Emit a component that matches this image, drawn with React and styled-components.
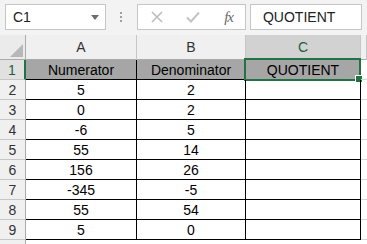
import React from "react";
import styled, { createGlobalStyle, css } from "styled-components";

const GlobalStyle = createGlobalStyle`
  html, body {
    margin: 0;
    padding: 0;
    background: #ffffff;
    overflow: hidden;
  }
  body {
    font-family: "Liberation Sans", Arial, sans-serif;
    font-size: 14px;
  }
`;

const rows = [
  ["Numerator", "Denominator", "QUOTIENT"],
  ["5", "2", ""],
  ["0", "2", ""],
  ["-6", "5", ""],
  ["55", "14", ""],
  ["156", "26", ""],
  ["-345", "-5", ""],
  ["55", "54", ""],
  ["5", "0", ""],
];

const green = "#217346";

const Page = styled.div`
  width: 367px;
  height: 244px;
  overflow: hidden;
  background: #ffffff;
`;

const TopBar = styled.div`
  height: 35px;
  box-sizing: border-box;
  padding: 4px 5px 0 5px;
  background: #f3f3f3;
  display: flex;
  align-items: flex-start;
`;

const Box = styled.div`
  height: 26px;
  box-sizing: border-box;
  background: #ffffff;
  border: 1px solid #c6c6c6;
  display: flex;
  align-items: center;
  color: #222;
`;

const NameBox = styled(Box)`
  width: 102px;
  padding: 0 6px 0 7px;
  justify-content: space-between;
`;

const Caret = styled.span`
  width: 0;
  height: 0;
  border-left: 4px solid transparent;
  border-right: 4px solid transparent;
  border-top: 5px solid #6d6d6d;
`;

const Grip = styled.div`
  width: 31px;
  height: 26px;
  display: flex;
  flex-direction: column;
  align-items: center;
  justify-content: center;
  gap: 2px;

  span {
    width: 2px;
    height: 2px;
    background: #a0a0a0;
  }
`;

const ButtonGroup = styled(Box)`
  width: 110px;
  padding: 0 8px 0 13px;
  justify-content: space-between;
`;

const Fx = styled.span`
  font-family: "Liberation Serif", "Times New Roman", serif;
  font-style: italic;
  font-size: 15px;
  color: #6a6a6a;
  letter-spacing: -1px;
  margin-right: 4px;
`;

const FormulaInput = styled(Box)`
  margin-left: 4px;
  width: 113px;
  padding-left: 12px;
`;

const Grid = styled.div`
  display: grid;
  grid-template-columns: 26px 111px 109px 115px 1fr;
  grid-auto-rows: 20px;
  grid-template-rows: 25px;
`;

const Corner = styled.div`
  background: #ebebeb;
  border-right: 1px solid #ababab;
  border-bottom: 1px solid #ababab;
  box-sizing: border-box;
  display: flex;
  align-items: flex-end;
  justify-content: flex-end;
  padding: 0 2px 2px 0;

  span {
    width: 0;
    height: 0;
    border-left: 13px solid transparent;
    border-bottom: 13px solid #b8b8b8;
  }
`;

const ColHeader = styled.div`
  box-sizing: border-box;
  background: ${({ $active }) => ($active ? "#d2d2d2" : "#f0f0f0")};
  border-right: 1px solid #c6c6c6;
  border-bottom: ${({ $active }) => ($active ? `2px solid ${green}` : "1px solid #ababab")};
  color: ${({ $active }) => ($active ? "#1c5f3a" : "#333")};
  display: flex;
  align-items: center;
  justify-content: center;
  padding-top: ${({ $active }) => ($active ? "1px" : "0")};
`;

const RowHeader = styled.div`
  box-sizing: border-box;
  background: ${({ $active }) => ($active ? "#e1e1e1" : "#f0f0f0")};
  border-bottom: 1px solid #c6c6c6;
  border-right: ${({ $active }) => ($active ? `2px solid ${green}` : "1px solid #ababab")};
  color: ${({ $active }) => ($active ? "#1c5f3a" : "#333")};
  text-align: center;
  line-height: 19px;
  padding-top: 1px;
`;

const Cell = styled.div`
  position: relative;
  box-sizing: border-box;
  text-align: center;
  line-height: 19px;
  padding-top: 1px;
  color: #000;
  white-space: nowrap;
  ${({ $table }) =>
    $table
      ? css`
          border-right: 1px solid #000;
          border-bottom: 1px solid #000;
        `
      : css`
          border-bottom: 1px solid #d4d4d4;
        `}
  ${({ $head }) => $head && css`background: #a6a6a6;`}
`;

const Selection = styled.div`
  position: absolute;
  top: -2px;
  left: -2px;
  right: -1px;
  bottom: -2px;
  border: 2px solid ${green};
  pointer-events: none;
`;

const FillHandle = styled.div`
  position: absolute;
  right: -3px;
  bottom: -3px;
  width: 6px;
  height: 6px;
  background: ${green};
  border: 1px solid #fff;
  border-right: none;
  border-bottom: none;
`;

const CrossIcon = () => (
  <svg width="12" height="12" viewBox="0 0 12 12">
    <path d="M1 1 L11 11 M11 1 L1 11" stroke="#bdbdbd" strokeWidth="1.6" fill="none" />
  </svg>
);

const CheckIcon = () => (
  <svg width="14" height="12" viewBox="0 0 14 12">
    <path d="M1 6.5 L5 10.5 L13 1.5" stroke="#c4c4c4" strokeWidth="2" fill="none" />
  </svg>
);

const App = () => {
  return (
    <Page>
      <GlobalStyle />
      <TopBar>
        <NameBox>
          C1
          <Caret />
        </NameBox>
        <Grip>
          <span />
          <span />
          <span />
        </Grip>
        <ButtonGroup>
          <CrossIcon />
          <CheckIcon />
          <Fx>fx</Fx>
        </ButtonGroup>
        <FormulaInput>QUOTIENT</FormulaInput>
      </TopBar>

      <Grid>
        <Corner>
          <span />
        </Corner>
        <ColHeader>A</ColHeader>
        <ColHeader>B</ColHeader>
        <ColHeader $active>C</ColHeader>
        <ColHeader />

        {rows.map((row, i) => (
          <React.Fragment key={i}>
            <RowHeader $active={i === 0}>{i + 1}</RowHeader>
            {row.map((value, j) => (
              <Cell key={j} $table $head={i === 0}>
                {value}
                {i === 0 && j === 2 && (
                  <Selection>
                    <FillHandle />
                  </Selection>
                )}
              </Cell>
            ))}
            <Cell />
          </React.Fragment>
        ))}

        <RowHeader />
        <Cell />
        <Cell />
        <Cell />
        <Cell />
      </Grid>
    </Page>
  );
};

export default App;
